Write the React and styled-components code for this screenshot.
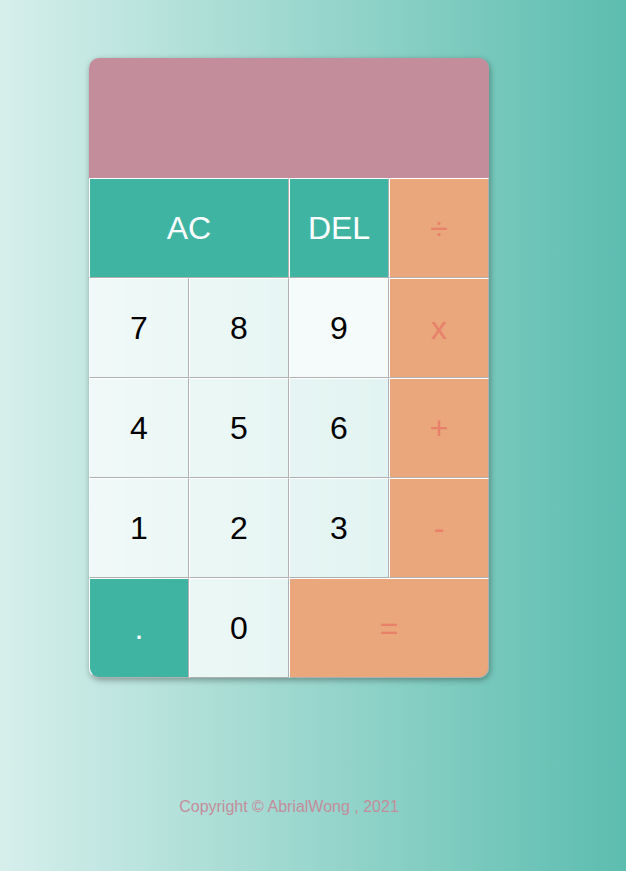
import styled, { createGlobalStyle } from "styled-components";

const GlobalStyle = createGlobalStyle`
  * {
    box-sizing: border-box;
  }
  body {
    margin: 0;
    min-height: 871px;
    font-family: "Liberation Sans", Arial, sans-serif;
    background: linear-gradient(to right, #d6efeb, #5cbdaf);
  }
`;

const keys = [
  { label: "AC", kind: "action", wide: true },
  { label: "DEL", kind: "action" },
  { label: "÷", kind: "operator" },
  { label: "7" },
  { label: "8" },
  { label: "9", light: true },
  { label: "x", kind: "operator" },
  { label: "4" },
  { label: "5" },
  { label: "6" },
  { label: "+", kind: "operator" },
  { label: "1" },
  { label: "2" },
  { label: "3" },
  { label: "-", kind: "operator" },
  { label: ".", kind: "action", corner: "left" },
  { label: "0" },
  { label: "=", kind: "operator", wide: true, corner: "right" },
];

export default function App() {
  return (
    <Page>
      <GlobalStyle />
      <Calculator>
        <Display />
        {keys.map((key) => (
          <Key
            key={key.label}
            $kind={key.kind}
            $wide={key.wide}
            $light={key.light}
            $corner={key.corner}
          >
            {key.label}
          </Key>
        ))}
      </Calculator>
      <Footer>Copyright © AbrialWong , 2021</Footer>
    </Page>
  );
}

const Page = styled.main`
  display: flex;
  flex-direction: column;
  align-items: center;
  width: 400px;
  margin-left: 89px;
  padding-top: 58px;
`;

const Calculator = styled.div`
  display: grid;
  grid-template-columns: repeat(4, 100px);
  grid-template-rows: 120px repeat(5, 100px);
  border-radius: 10px;
  box-shadow: 1px 2px 6px rgba(0, 0, 0, 0.35);
`;

const Display = styled.div`
  grid-column: span 4;
  background: #c48d9b;
  border-radius: 10px 10px 0 0;
`;

const colours = {
  action: { bg: "#40b4a3", fg: "#ffffff" },
  operator: { bg: "#e9a77b", fg: "#e8806a" },
};

const Key = styled.button`
  grid-column: ${(p) => (p.$wide ? "span 2" : "span 1")};
  display: flex;
  align-items: center;
  justify-content: center;
  padding: 0;
  font-family: "Liberation Sans", Arial, sans-serif;
  font-size: 32px;
  color: ${(p) => (p.$kind ? colours[p.$kind].fg : "#000")};
  background: ${(p) =>
    p.$kind
      ? colours[p.$kind].bg
      : p.$light
      ? "rgba(255, 255, 255, 0.9)"
      : "rgba(255, 255, 255, 0.75)"};
  border-top: 1px solid #fff;
  border-left: 1px solid #fff;
  border-right: 1px solid #b0b0b0;
  border-bottom: 1px solid #b0b0b0;
  border-radius: ${(p) =>
    p.$corner === "left"
      ? "0 0 0 10px"
      : p.$corner === "right"
      ? "0 0 10px 0"
      : "0"};
  cursor: pointer;
`;

const Footer = styled.p`
  margin: 120px 0 0;
  font-size: 16px;
  color: #c48d9b;
`;
